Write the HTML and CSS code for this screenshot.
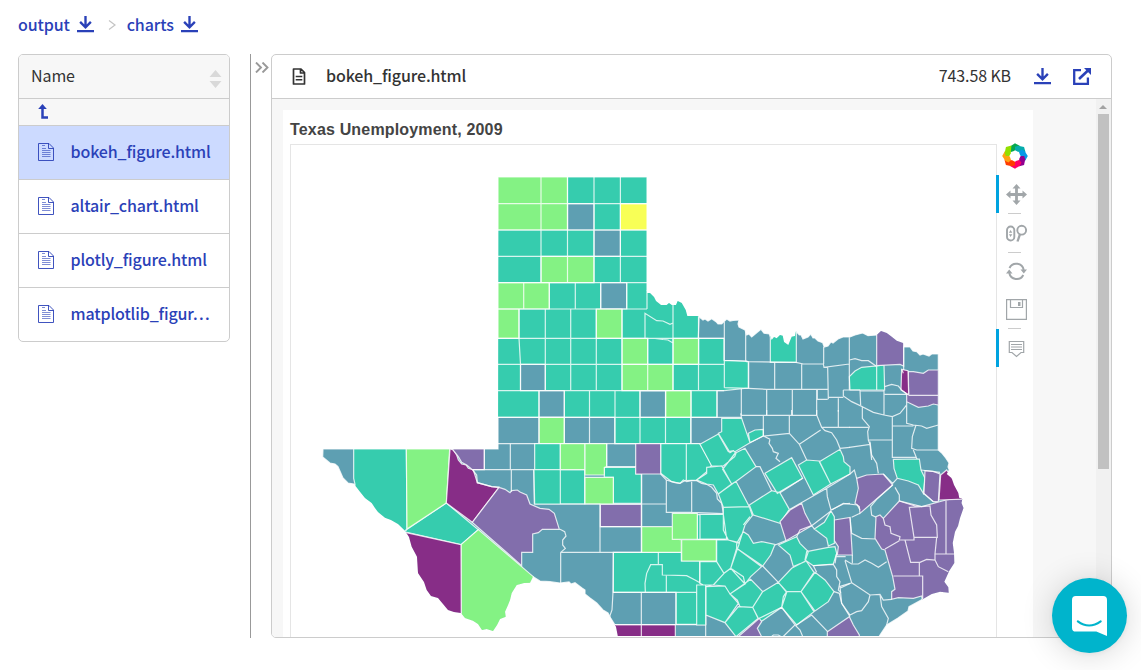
FILE: index.html
```html
<!DOCTYPE html>
<html lang="en">
<head>
<meta charset="utf-8">
<title>charts</title>
<link rel="stylesheet" href="styles.css">
</head>
<body>
<svg class="defs" aria-hidden="true">
  <symbol id="download" viewBox="0 0 18 18"><path d="M0 16H18M9 0V12M3.300 6.300 9 12 14.700 6.300" fill="none" stroke="currentColor" stroke-width="2.500"/></symbol>
  <symbol id="doc" viewBox="0 0 16 18"><path d="M.5.5H11L15.500 5V17.500H.5ZM10.500.5V5.500H15.500" fill="none" stroke="currentColor" stroke-width=".9"/><path d="M4 2.500H7M4 5.500H8M4 7.500H12.500M4 9.500H12.500M4 11.500H12.500M4 13.500H12.500" fill="none" stroke="currentColor" stroke-width=".8" opacity=".75"/></symbol>
</svg>
<nav class="crumbs">
  <a class="crumb">output <svg class="dl"><use href="#download"/></svg></a>
  <svg class="sep" viewBox="0 0 8 10"><path d="M1 .5 7 5 1 9.500" fill="none" stroke="#c4c4c4" stroke-width="1.200"/></svg>
  <a class="crumb">charts <svg class="dl"><use href="#download"/></svg></a>
</nav>
<main class="layout">
  <aside class="files">
    <div class="files-head"><span>Name</span><svg class="sort" viewBox="0 0 12 18"><path d="M6 0 12 7H0ZM6 18 0 11H12Z" fill="#d9d9d9"/></svg></div>
    <div class="up"><svg viewBox="0 0 10 15"><path d="M4 3V13.500H9.500" fill="none" stroke="#2a41b8" stroke-width="2.500"/><path d="M4 0 8.300 5H-.3Z" fill="#2a41b8"/></svg></div>
    <div class="file selected"><svg><use href="#doc"/></svg><span>bokeh_figure.html</span></div>
    <div class="file"><svg><use href="#doc"/></svg><span>altair_chart.html</span></div>
    <div class="file"><svg><use href="#doc"/></svg><span>plotly_figure.html</span></div>
    <div class="file"><svg><use href="#doc"/></svg><span>matplotlib_figur…</span></div>
  </aside>
  <div class="splitter"><svg viewBox="0 0 14 11"><path d="M1 .5 6 5.500 1 10.500M7.500.5 12.500 5.500 7.500 10.500" fill="none" stroke="#999" stroke-width="1.900"/></svg></div>
  <section class="preview">
    <header class="preview-head">
      <svg class="file-icon" viewBox="0 0 13 17"><path d="M1 1H8.500L12 4.500V16H1ZM8 1V5H12" fill="none" stroke="#333" stroke-width="1.700" stroke-linejoin="round"/><path d="M3.200 8.500H9.800M3.200 11.700H9.800" stroke="#333" stroke-width="1.500"/></svg>
      <span class="title">bokeh_figure.html</span>
      <span class="size">743.58 KB</span>
      <svg class="dl"><use href="#download"/></svg>
      <svg class="open" viewBox="0 0 18 17"><path d="M8 2.100H1.200V15.800H14.900V9.500" fill="none" stroke="#2a41b8" stroke-width="2.300"/><path d="M6 11 16 1.500" stroke="#2a41b8" stroke-width="2.600"/><path d="M11 0H18V7Z" fill="#2a41b8"/></svg>
    </header>
    <div class="viewport">
      <div class="figure">
        <h1 class="fig-title">Texas Unemployment, 2009</h1>
        <div class="plot-row">
          <div class="plot">
            <svg class="map" viewBox="291 145 705 491">
              <defs><clipPath id="state"><path id="outline" d="M498 177H647V293H650L654 297 656 301 661 305 666.700 305 669 303 671.700 305 676 305 677.700 301 681.700 303 685.700 310 687.300 316H698L703 320 705 319 708 321 711.700 318.700 716 321.700 718 324 721.700 324 724 321.700 726.700 319 730 321 733 320.500 739 320 738 324 739 327 745 330 746.700 335 749 334 751.700 337 756.700 332.700 761 329.300 764 333.300 769.300 334 771.700 340 774 337 776.700 338.300 780 335 782.700 335.700 784 342 788.300 345 791.700 336.700 795 336 796 331.300 799.300 335 801 335 803 339 808 337 810.700 334 813 338 815 338 818 341 822.700 342.700 824.300 347 828 346 831 342 833 343 838 339 843 337 850 337 855 335 862.700 333 868 335.700 876.700 335 881 331 886.700 333 891.700 336.700 896.700 340.700 903 343 904 347 910 347 913 351 916.700 351.700 920 355 923 354 929 356 931.700 354 938.300 354V450L941.700 453 945.700 458 949 463 948 467 949.300 470 946.700 474 951.700 478.300 954 485 958.300 493 959.300 498.300 962.300 499 961.500 503 963.500 508 960 518 958 526 955 531.700 952.700 543 954 553.300 954.300 563 949.300 570.700 944.300 581.700 948.300 587.300 948.700 592.700 940 591.700 931.700 594 923 599 909 606.700 908 611 898 618 886.700 625 880 635 876 642H620L618 637 616 626.700 610.700 618 608 613 603 610 596.700 603 590 598 585 594 585 590 582 588 578 585 575 582.700 571 584 569 582 560 583 550 581.700 540 581 533 576.700 530 582.700 524 583 516.700 585 511.700 593 510 600 508 605 505 611.700 505.700 616.700 500 619 497 625 493 631 486.700 629 482 630 478 624 473 620.700 465 618 461 613 454 612 448 610 443 604 438 598 431 596 426.700 590 424 582 418 573 417 556.700 411.700 546.700 409 537 405 530.700 398 524 391 520 385 517.700 378 512 375 508 371.700 503 365 498 360 491.700 354 484 348 483 343 478 338 466.700 335 464 330 463 322.700 457 323 449H498Z"/></clipPath></defs>
              <use href="#outline" class="slate"/>
              <g clip-path="url(#state)">
                <path class="teal" d="M498 177H647V290H700L698.300 338.300H724V360.300L748.300 361.500V388L724 390.700H717V417.300H690.700V443.700H614.700V417.300H497.500Z"/>
                <path class="slate" d="M567.500 203.700H594V230H567.500ZM594 230H620.400V256.400H594ZM600.700 282.700H626.700V309H600.700ZM520.500 364.300H545.300V390.700H520.500ZM539 390.700H564.300V417.300H539ZM640 390.700H665.700V417.300H640Z"/>
                <path class="green" d="M498 177H567.500V230H498ZM541 256.400H594V282.700H541ZM498 282.700H549.300V309H498ZM498 309H519V338.300H498ZM596.300 309H622V338.300H596.300ZM622 338.300H647.700V364.300H622ZM673 338.300H698.700V364.300H673ZM622 364.300H673V390.700H622ZM665.700 390.700H691V417.300H665.700ZM539 417.300H564.300V443.700H539Z"/>
                <path class="yellow" d="M620.400 203.700H647V230H620.400Z"/>
                <path class="lines" d="M498 203.700H647M498 230H647M498 256.400H647M498 282.700H647M498 309H647M498 338.300H724M498 364.300H724M498 390.700H724M498 417.300H741M497.500 443.700H700M541 177V282.700M567.500 177V282.700M594 177V282.700M620.400 177V282.700M523.700 282.700V309M549.300 282.700V309M575.300 282.700V309M600.700 282.700V309M626.700 282.700V309M647 290V309M519 309V338.300L520.500 364.300V390.700M545.300 309V390.700M570.700 309V390.700M596.300 309V390.700M622 309V390.700M645 338.300V313.300L656.700 320.700 663 321 670 324.300 673 323M647.700 338.300V390.700M673 303V390.700M655 338.300 663 339.500 668 340 673 343M698.500 316V390.700M539 390.700V443.700M564.300 390.700V443.700M589.500 390.700V443.700M615 390.700V443.700M640 390.700V443.700M665.500 390.700V443.700M691 390.700V443.700M717 390.700V417.300"/>
                <g transform="translate(310 430) scale(.33333)">
                  <path class="teal" d="M131 57H289L291 298 280 312H133L135 163 131 145ZM409 219 505 299 453 344 280 305Z"/>
                  <path class="green" d="M289 57H419L409 219 291 297ZM453 344 505 299 670 440 680 640H454Z"/>
                  <path class="magenta" d="M420 57 430 60 440 75 445 90 455 102 468 105 475 115 490 120 502 158 545 170 567 172 487 277 409 219ZM285 307 453 344 454 620H280Z"/>
                  <path class="purple" d="M427 57H523V119H487L470 105 455 97 445 80ZM567 172 585 178 600 188 605 182 622 180 630 186 650 195 660 222 690 235 717 238 733 250 748 298H697L685 308 668 312V367H635V407L487 277Z"/>
                  <path class="lines" d="M523 57V119M601 41V119M676 41V119M487 119H676M604 119V185M671 119 673 222H750M487 119 500 135 502 158 545 170 567 172"/>
                </g>
                <g transform="translate(540 430) scale(.33333)">
                  <path class="teal" d="M-16 41H61V119H-16ZM-18 119H61V222H-16ZM61 119H134V222H61ZM193 112H288V132H304V220H220V142H193ZM362 41H439V150L420 160 395 155 362 130ZM439 41H480L515 105 500 125 470 150 439 152ZM472 254H550L555 328H472ZM220 367H424V393H529L552 430 525 462 497 470V583H408V487H220Z"/>
                  <path class="green" d="M61 41H134V119H61ZM135 41H200V110L193 112V135H135ZM135 142H220V222H135ZM305 290H397V327L424 329V367H305ZM397 250H472V328H397ZM425 329H529V393H425Z"/>
                  <path class="purple" d="M287 41H362V132H287ZM181 223H304V290H181Z"/>
                  <path class="magenta" d="M220 584H406V630H220Z"/>
                  <path class="lines" d="M200 41V110H288M305 132V290M305 222H379M362 132 379 150 395 155 405 158 420 160 430 150 440 155 455 152 470 152 485 160 500 163 515 172 530 190 532 207 545 220 550 250 555 265 552 285 557 300 553 315 562 328M379 150V247H455L550 251M455 155V250M60 222H181M180 222V367M181 290H304V367M62 367H305M62 367V462M220 367 219 487 216 540 208 562M220 487H408M304 487V625M408 487V584M220 584H497M497 470V625M60 298 74 305 78 318 68 330 68 345 76 355 62 367M355 367V404M316 485 315 460 320 430 332 404H367V435L440 437 465 450 497 468M379 437V487M479 394V460M408 487H470L473 498 482 492 497 470"/>
                </g>
                <g transform="translate(680 290) scale(.33333)">
                  <path class="teal" d="M271 90H349V217H271ZM508 260 525 243 545 232 590 228V300H510ZM590 228 612 225 614 300H590Z"/>
                  <path class="purple" d="M590 110H605L671 145V228L660 223 590 227ZM685 245 700 245 730 250 745 240 775 240V345L760 342 745 348 715 352 680 335V312H686Z"/>
                  <path class="magenta" d="M665 238 684 242 686 314 663 300Z"/>
                  <path class="lines" d="M133 95V293M197 118V215M431 170V222M508 142V300M671 160V240M133 211 200 213V215L348 217 370 222H430L432 232 508 222M206 215V293M284 217V297M365 222V297M443 232 445 328M133 293 205 295 260 298H443M412 298V328H443M443 322H490M184 295V376M260 297V376M337 298V376M410 298V376M475 325V365M490 300H540M490 300 490 318 515 335 547 350V385L568 410 563 425 565 450H637M540 300 542 345M547 350 580 367 612 375 637 380 660 370 672 355 680 345M508 210 525 206 545 212 565 212 588 228M665 238 670 250M614 290 635 283 655 288 665 300 680 312M612 300V375M614 313H683M540 303H612M686 316H775M680 335V400L700 405 725 408 740 415 775 405M637 380V502H710M637 408H700M708 405 697 440 695 475 710 480H775M700 480 712 510M508 412H565M508 472 570 463 575 510M565 450 570 463"/>
                </g>
                <g transform="translate(820 400) scale(.33333)">
                  <path class="teal" d="M220 178 298 177 303 210 315 235 310 280 295 255 265 243 232 235 222 205Z"/>
                  <path class="purple" d="M110 235 140 225 190 222 218 255 120 340 118 320 105 310 115 265ZM43 360 90 352 97 465 52 465 55 440 42 420ZM315 212 340 214 360 222 355 305H340L312 280ZM190 355 238 303 305 320 378 300 440 290V620H310L305 588 280 595 235 593 215 598V575L225 568 218 530 195 450 185 447 165 415 168 350 180 345ZM22 695 88 650 100 675 118 705V720H22Z"/>
                  <path class="magenta" d="M362 225 380 210 400 240 435 297 357 300Z"/>
                  <path class="lines" d="M150 125 155 165 170 190 175 220M190 222 218 250 232 235M225 262 238 285 238 303M303 210 360 217M310 280 340 305M218 255 170 298 152 320 155 345 168 352M238 303 285 318 305 320M120 340 95 352M90 352 95 400 125 415 165 417M97 465V490M75 480 95 492 115 492 135 480 155 490 175 502 200 485M75 482 95 548 60 565M95 548 120 565 150 585 180 583 190 600 215 598M150 585 145 605 125 632 110 635 90 645 65 610 60 560M180 583 185 620 205 655 200 675M35 330 70 310 112 315 120 330M90 222 103 210 110 235M268 322 305 320 330 318 333 345 350 375 352 412H282ZM190 355 195 375 210 380 213 400 240 410 238 420H282V412M195 447 238 422M255 420 272 487H298V528H220M378 302V462M350 412 345 462H403M345 462 345 480 320 478 298 488M345 480 355 500 385 515M298 528H308V597"/>
                </g>
                <g transform="translate(700 410) scale(.33333)">
                  <path class="teal" d="M65 25H125L150 98 105 125 100 122 90 128 55 70 65 65ZM0 103 55 72 85 125 100 122 108 130 104 140 70 168H35ZM145 70 165 60 190 58V78L150 98ZM105 130 135 115 168 170 110 213 95 222 68 178ZM20 172 65 168 95 222 55 252 40 225 20 222 -10 210 20 190ZM55 252 108 214 148 290 70 292 60 265ZM148 285 215 242 240 248 268 298 240 340 160 315ZM195 190 275 143 308 205 232 250ZM295 165 320 150 358 153 392 222 340 255ZM358 155 420 118 430 140 432 155 450 170V192L392 222ZM70 292 148 290 157 317 135 345 118 398 85 390 70 360ZM0 313H70L80 387H0ZM50 390H85L118 400 92 475 72 490 50 455ZM110 400 130 365 145 375 160 400 185 395 225 403 212 435 188 468 110 415ZM110 415 185 470 152 500 135 522 92 475ZM0 455H50L72 490 40 525H10L0 520ZM40 525 72 490 92 475 130 500 135 522 90 552 75 528ZM90 552 152 508 188 545 158 592 120 590 112 570ZM18 530 75 528 90 552 115 580 75 638 18 615ZM-10 525H17V645H-10ZM115 590 158 592 175 625 108 680 75 638ZM158 592 188 545 235 517 260 547 245 592 180 637ZM235 405 290 380 300 400 325 425 315 455 280 470 270 435ZM235 517 275 475 318 452 342 487 303 545H260ZM250 560 260 545H303L342 605 290 645 245 592ZM345 487 375 510 402 545 385 575 345 603 303 545ZM320 425 385 412 405 410 410 430 400 462 340 467 315 450ZM343 357 373 337 393 303 403 320V400L385 408 380 385Z"/>
                  <path class="purple" d="M240 335 270 300 305 280 315 310 335 347 258 392ZM115 680 178 625 185 635 172 655 190 690H110Z"/>
                  <path class="lines" d="M150 98 190 78 210 88M190 15V78L268 70 298 103 362 60M125 16H350M200 0V15M275 0V15M125 25 122 10M350 0V15L365 52H450M415 0V52M268 15V70M210 88 207 100 217 115 220 125 235 130 228 145 240 155M298 103 320 150M365 52 375 62 395 68 410 90 420 115 450 112M168 170 180 170 215 242M240 248 308 205M270 298 380 235 382 260 393 300 430 282 450 280M380 235 450 192M335 347 393 303M258 392 225 405M335 347 343 357M290 380 300 360 335 347M188 468 235 517M178 625 245 592 285 645 245 684M210 684 220 675 235 675 250 684M285 645 290 645 335 615 383 665M285 645 300 660 310 684M402 545 418 550 425 580 450 620M350 487 340 467 400 463 410 480 410 500 420 515 415 540 423 548M410 440H437M450 520 418 530M410 430 405 460M130 345 150 320"/>
                </g>
              </g>
            </svg>
          </div>
          <div class="tools">
            <svg class="logo" viewBox="-13 -13 26 26">
              <path fill="#05a84f" d="M-5-9.500 0-12.800 5-10-1-5-4-4-6.500-6.500Z"/>
              <path fill="#05acac" d="M-5-9.500 0-12.800 5-10-1-5-4-4-6.500-6.500Z" transform="rotate(45)"/>
              <path fill="#0898e8" d="M-5-9.500 0-12.800 5-10-1-5-4-4-6.500-6.500Z" transform="rotate(90)"/>
              <path fill="#900090" d="M-5-9.500 0-12.800 5-10-1-5-4-4-6.500-6.500Z" transform="rotate(135)"/>
              <path fill="#f06" d="M-5-9.500 0-12.800 5-10-1-5-4-4-6.500-6.500Z" transform="rotate(180)"/>
              <path fill="#ff3c00" d="M-5-9.500 0-12.800 5-10-1-5-4-4-6.500-6.500Z" transform="rotate(225)"/>
              <path fill="#ffa313" d="M-5-9.500 0-12.800 5-10-1-5-4-4-6.500-6.500Z" transform="rotate(270)"/>
              <path fill="#92df00" d="M-5-9.500 0-12.800 5-10-1-5-4-4-6.500-6.500Z" transform="rotate(315)"/></svg>
            <div class="tool active"><svg viewBox="0 0 21 21"><path d="M10.500 4V17M4 10.500H17" stroke="#a1a6a9" stroke-width="2.800"/><path d="M10.500 0 14.500 4.500H6.500ZM10.500 21 6.500 16.500H14.500ZM0 10.500 4.500 6.500V14.500ZM21 10.500 16.500 14.500V6.500Z" fill="#a1a6a9"/></svg></div>
            <i class="divider"></i>
            <div class="tool"><svg viewBox="0 0 21 21"><g fill="none" stroke="#a1a6a9" stroke-width="1.900"><rect x="1" y="3.500" width="7.300" height="14" rx="3.600"/><circle cx="15.700" cy="7.200" r="4.400"/><path d="M14 11.200 11.500 18.500" stroke-width="2.300"/></g><path d="M4.600 7 6.300 9.700H2.900ZM4.600 14 6.300 11.300H2.900Z" fill="#a1a6a9"/></svg></div>
            <i class="divider tight"></i>
            <div class="tool"><svg viewBox="0 0 21 21"><path d="M3.500 7A7.500 7.500 0 0 1 17.700 9M17.300 14A7.500 7.500 0 0 1 3.300 12" fill="none" stroke="#a1a6a9" stroke-width="2"/><path d="M14.500 8.500H21L17.800 12.500ZM0 12.500 3.200 8.500 6.500 12.500Z" fill="#a1a6a9"/></svg></div>
            <div class="tool"><svg viewBox="0 0 21 21"><path d="M.6.6H20.400V20.400H.6ZM4.500.6V8.500H16.500V.6" fill="none" stroke="#a1a6a9" stroke-width="1.200"/><path d="M12 3H14.500V7H12Z" fill="#a1a6a9"/></svg></div>
            <i class="divider"></i>
            <div class="tool active"><svg viewBox="0 0 21 21"><path d="M3.300 3.500H17.700V14.500H15L10.500 18.500 6 14.500H3.300Z" fill="none" stroke="#a1a6a9" stroke-width="1.200"/><path d="M5 6.500H16M5 9H16M5 11.500H16" stroke="#a1a6a9" stroke-width="1.200"/></svg></div>
          </div>
        </div>
      </div>
      <div class="scrollbar"><svg viewBox="0 0 8 4"><path d="M4 0 8 4H0Z" fill="#a3a3a3"/></svg><div class="thumb"></div></div>
    </div>
  </section>
</main>
<button class="chat" aria-label="Chat"><svg viewBox="0 0 36 41"><path d="M4 0H32Q36 0 36 4V41L25 36.500H4Q0 36.500 0 32.500V4Q0 0 4 0Z" fill="#fff"/><path d="M6 26Q17.500 34.500 29.500 26" fill="none" stroke="#00b4cc" stroke-width="2.200" stroke-linecap="round"/></svg></button>
</body>
</html>
```
FILE: styles.css
```css
* { box-sizing: border-box; }
body {
  margin: 0;
  height: 670px;
  overflow: hidden;
  background: #fff;
  color: #333;
  font: 400 16px/24px "Noto Sans CJK SC", sans-serif;
}
svg { display: block; flex: none; }
.defs { position: absolute; width: 0; height: 0; }
.crumbs {
  display: flex;
  align-items: center;
  height: 54px;
  padding: 0 18px 6px;
  color: #2a41b8;
  font-weight: 500;
  letter-spacing: -.12px;
}
.crumb { display: flex; align-items: center; gap: 7px; }
.dl { width: 17px; height: 17px; color: #2a41b8; }
.sep { width: 8px; height: 10px; margin: 2px 11px 0 14px; }
.layout { display: flex; height: 584px; padding-left: 18px; align-items: flex-start; }
.files {
  width: 212px;
  height: 288px;
  border: 1px solid #ccc;
  border-radius: 5px;
  overflow: hidden;
}
.files-head {
  display: flex;
  justify-content: space-between;
  align-items: center;
  height: 44px;
  padding: 0 7px 0 12px;
  background: #f7f7f7;
  border-bottom: 1px solid #ccc;
}
.files-head span { padding-bottom: 4px; letter-spacing: -.1px; }
.sort { width: 13px; height: 18px; margin-top: 4px; }
.up { height: 27px; padding: 5px 0 0 19px; background: #f7f7f7; border-bottom: 1px solid #ccc; }
.up svg { width: 11px; height: 15px; overflow: visible; }
.file {
  display: flex;
  align-items: center;
  gap: 17px;
  height: 54px;
  padding: 0 0 2px 18.5px;
  border-bottom: 1px solid #ccc;
  color: #2a41b8;
  font-weight: 500;
  letter-spacing: -.13px;
  white-space: nowrap;
}
.file span { padding-bottom: 2px; }
.file:last-child { border-bottom: 0; }
.file svg { width: 16px; height: 18px; }
.file.selected { background: #ccdaff; }
.splitter {
  width: 21px;
  height: 584px;
  margin-left: 20px;
  padding: 8px 0 0 4px;
  border-left: 1px solid #999;
}
.splitter svg { width: 14px; height: 11px; }
.preview {
  display: flex;
  flex-direction: column;
  width: 841px;
  height: 584px;
  border: 1px solid #ccc;
  border-radius: 5px;
  overflow: hidden;
}
.preview-head {
  display: flex;
  align-items: center;
  flex: none;
  height: 44px;
  padding: 0 20px;
  border-bottom: 1px solid #ccc;
}
.file-icon { width: 14px; height: 17px; }
.title { margin-left: 20px; padding-bottom: 4px; font-weight: 500; letter-spacing: -.13px; }
.size { margin: 0 23px 0 auto; padding-bottom: 4px; letter-spacing: -.12px; }
.open { width: 18px; height: 17px; margin-left: 22px; }
.viewport { display: flex; justify-content: space-between; flex: 1; min-height: 0; padding-left: 11px; background: #f7f7f7; }
.figure { width: 750px; height: 600px; margin-top: 11px; padding: 7px 0 0 7px; background: #fff; }
.fig-title { margin: 0; height: 27px; padding-top: 1px; font: bold 16px/24px "Liberation Sans", Arial, sans-serif; letter-spacing: .17px; color: #444; }
.plot-row { display: flex; }
.plot { width: 707px; height: 510px; border: 1px solid #e5e5e5; }
.map { width: 705px; height: 491px; }
.map path, .map use { vector-effect: non-scaling-stroke; stroke: rgba(255,255,255,.8); stroke-width: 1.2; }
.slate { fill: #5e9fb2; }
.teal { fill: #36ccae; }
.green { fill: #84f284; }
.purple { fill: #826eac; }
.magenta { fill: #872d87; }
.yellow { fill: #f8ff56; }
.lines { fill: none; }
.tools { display: flex; flex-direction: column; width: 36px; }
.logo { width: 26px; height: 26px; margin: -1px 0 6px 5px; }
.tool { height: 38px; padding: 9px 0 0 7px; border-left: 3px solid transparent; margin-left: -1px; }
.tool.active { border-left-color: #00a3e0; }
.tool svg { width: 21px; height: 21px; }
.divider { width: 13px; height: 1px; margin-left: 11px; background: #ccc; }
.divider.tight { margin-bottom: -1px; }
.scrollbar { width: 15px; background: #f1f1f1; padding: 6px 0 0 2px; }
.scrollbar svg { width: 8px; height: 4px; margin-left: 1px; }
.thumb { width: 11px; height: 355px; margin-top: 5px; background: #c1c1c1; }
.chat {
  position: fixed;
  left: 1052px;
  top: 578px;
  display: flex;
  align-items: center;
  justify-content: center;
  width: 75px;
  height: 75px;
  padding: 0;
  border: 0;
  border-radius: 50%;
  background: #00b4cc;
  box-shadow: 0 1px 6px rgba(0,0,0,.06), 0 2px 32px rgba(0,0,0,.16);
}
.chat svg { width: 35px; height: 40px; }
```
